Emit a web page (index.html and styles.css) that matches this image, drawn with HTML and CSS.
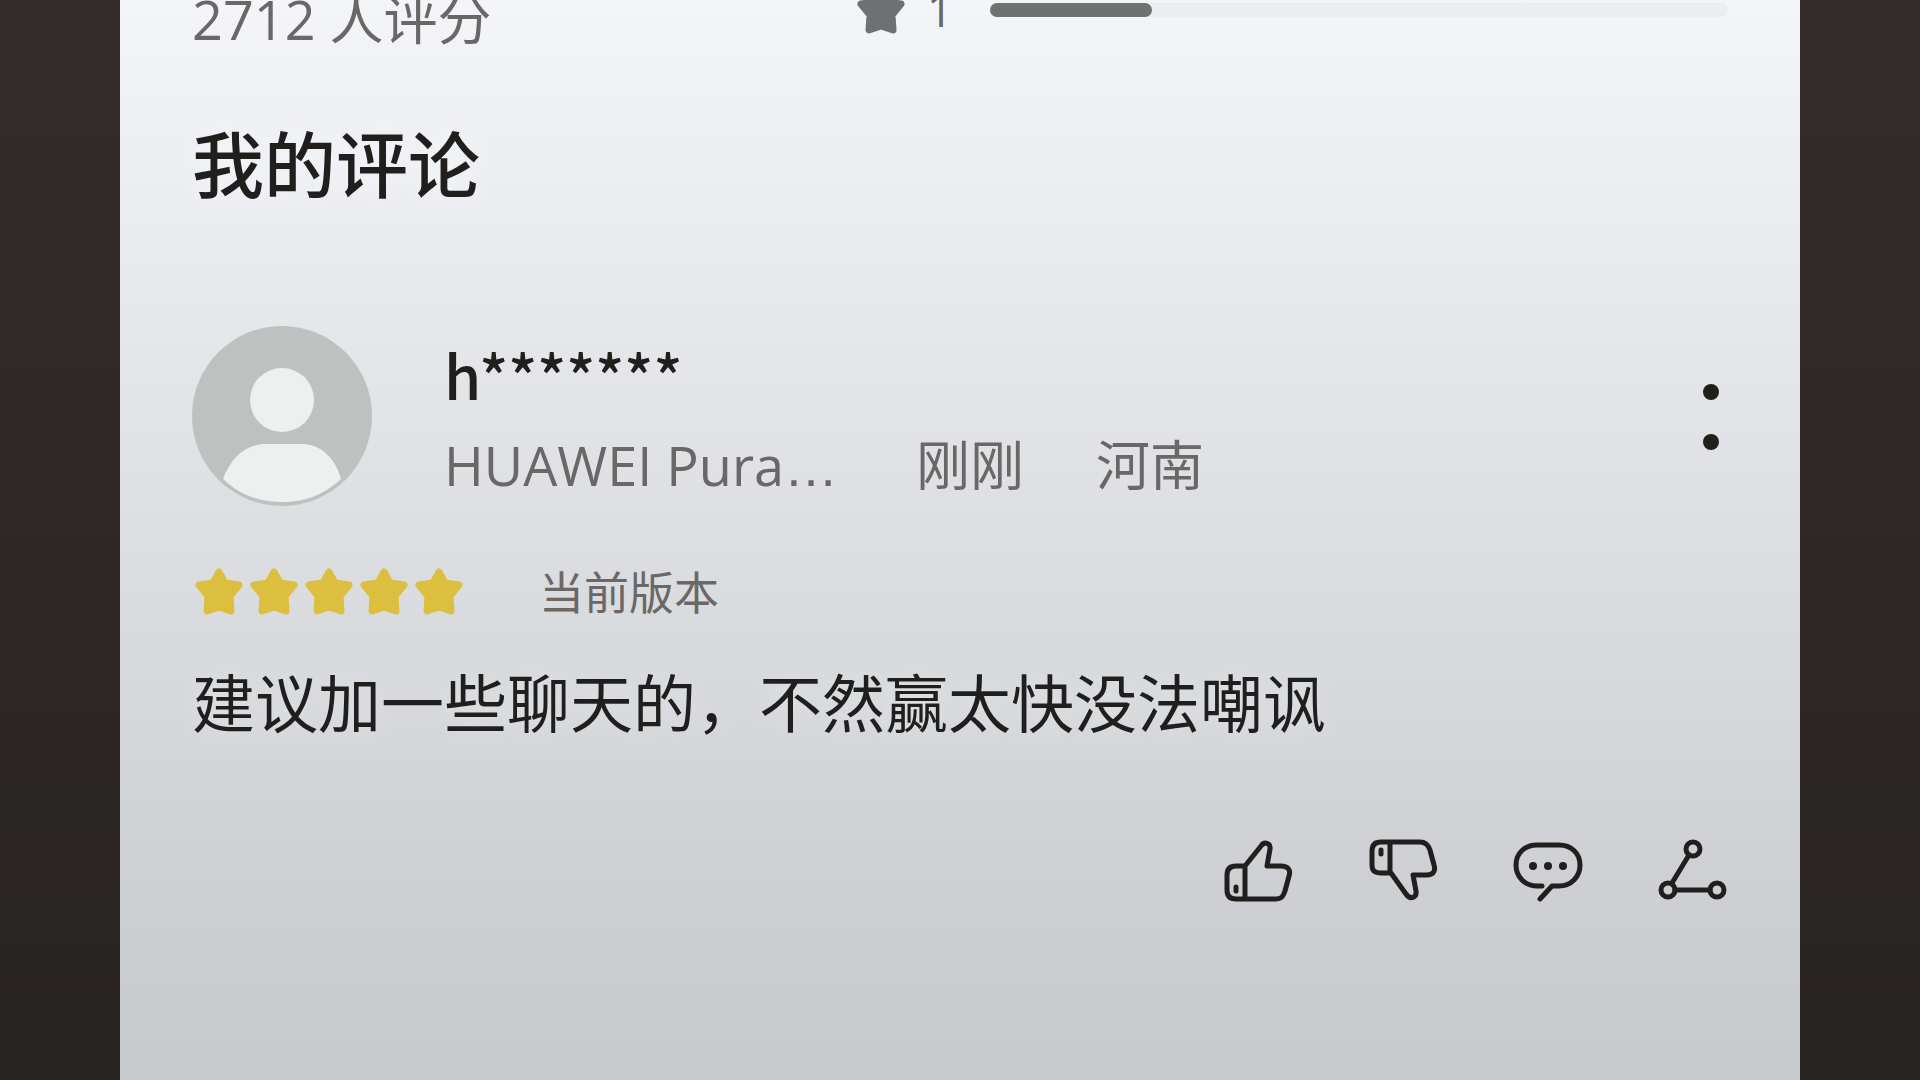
FILE: index.html
```html
<!DOCTYPE html>
<html lang="zh-CN">
<head>
  <meta charset="UTF-8">
  <meta name="viewport" content="width=device-width, initial-scale=1.0">
  <title>我的评论</title>
  <link rel="stylesheet" href="styles.css">
</head>
<body>

<svg class="symbols" aria-hidden="true">
  <symbol id="star" viewBox="0 0 55 55">
    <path d="M27 8 L33 19 L47 21 L38 32 L39 47 L27 43 L15 47 L16 32 L7 21 L21 19 Z" fill="currentColor" stroke="currentColor" stroke-width="7" stroke-linejoin="round"/>
  </symbol>
</svg>

<main class="panel">
  <section class="summary">
    <div class="summary-count">2712 人评分</div>
    <div class="summary-row">
      <svg class="summary-star"><use href="#star"/></svg>
      <span class="summary-level">1</span>
      <div class="bar"><div class="bar-fill" style="width: 22%"></div></div>
    </div>
  </section>

  <h2 class="title">我的评论</h2>

  <article class="review">
    <header class="review-header">
      <svg class="avatar" viewBox="0 0 180 180">
        <circle cx="90" cy="90" r="90" fill="#bfc0c0"/>
        <ellipse cx="90" cy="74" rx="32" ry="32" fill="#eeefef"/>
        <path d="M31 153 C39 131 54 118 74 118 H110 C129 118 143 132 149 153 C132 169 113 176 90 176 C67 176 48 169 31 153 Z" fill="#eeefef"/>
      </svg>
      <div class="user">
        <div class="user-name">h*******</div>
        <div class="user-meta">
          <span class="device">HUAWEI Pura<span class="dots">…</span></span>
          <span>刚刚</span>
          <span>河南</span>
        </div>
      </div>
      <button type="button" class="icon-button more" aria-label="更多">
        <svg viewBox="0 0 34 72">
          <circle cx="17" cy="12" r="8" fill="currentColor"/>
          <circle cx="17" cy="62" r="8" fill="currentColor"/>
        </svg>
      </button>
    </header>

    <div class="rating">
      <div class="stars">
        <svg><use href="#star"/></svg>
        <svg><use href="#star"/></svg>
        <svg><use href="#star"/></svg>
        <svg><use href="#star"/></svg>
        <svg><use href="#star"/></svg>
      </div>
      <span class="version">当前版本</span>
    </div>

    <p class="review-text">建议加一些聊天的，不然赢太快没法嘲讽</p>

    <footer class="actions">
      <button type="button" class="icon-button" aria-label="赞">
        <svg viewBox="0 0 72 72">
          <path d="M24 32 L40 12 C43 7 50 9 49 15 L46 32 H60 C67 32 70 36 68 42 L64 57 C62 63 60 65 55 65 H15 C9 65 6 62 6 56 V41 C6 35 9 32 15 32 Z M24 32 V65"/>
          <path d="M15 53 V57"/>
        </svg>
      </button>
      <button type="button" class="icon-button" aria-label="踩">
        <svg viewBox="0 0 72 72">
          <path d="M25 39 L40 60 C44 66 51 64 50 57 L47 41 H61 C67 41 70 37 68 31 L64 16 C62 10 59 8 54 8 H15 C9 8 6 11 6 17 V31 C6 37 9 39 15 39 Z M24 8 V39"/>
          <path d="M15 16 V20"/>
        </svg>
      </button>
      <button type="button" class="icon-button" aria-label="回复">
        <svg viewBox="0 0 72 72">
          <path d="M31 52 H26 C14 52 5 43 5 31 C5 19 14 11 26 11 H48 C60 11 69 19 69 31 C69 43 60 52 48 52 H41 L29 65"/>
          <g class="solid">
            <circle cx="22" cy="32" r="4"/>
            <circle cx="37" cy="32" r="4"/>
            <circle cx="52" cy="32" r="4"/>
          </g>
        </svg>
      </button>
      <button type="button" class="icon-button" aria-label="分享">
        <svg viewBox="0 0 72 72">
          <circle cx="37" cy="15" r="7"/>
          <circle cx="12" cy="56" r="7"/>
          <circle cx="61" cy="56" r="7"/>
          <path d="M33 21 L16 49 M19 56 H54"/>
        </svg>
      </button>
    </footer>
  </article>
</main>

</body>
</html>
```

FILE: styles.css
```css
* {
  box-sizing: border-box;
}
body {
  margin: 0;
  padding: 0 6.25vw;
  min-height: 100vh;
  display: flex;
  font-family: "Noto Sans CJK SC", sans-serif;
  color: #211e1e;
  background: linear-gradient(#332c2b, #282422);
}
.symbols {
  display: none;
}
.panel {
  flex: 1;
  min-width: 0;
  padding: 0 72px;
  background: linear-gradient(#f3f5f8 0%, #edeef2 15%, #dcdee1 50%, #cdced1 85%, #c8c9cc 100%);
}

/* rating summary */
.summary {
  display: grid;
  grid-template-columns: 662px 1fr;
  align-items: start;
  font-family: "Open Sans", "Noto Sans CJK SC", sans-serif;
  color: #6b6767;
}
.summary-count {
  font-size: 54px;
  line-height: 38px;
}
.summary-row {
  display: flex;
  align-items: center;
  height: 20px;
}
.summary-star {
  width: 55px;
  height: 55px;
  margin-right: 18px;
  color: #6f7071;
}
.summary-level {
  width: 63px;
  font-size: 45px;
  line-height: 20px;
}
.bar {
  flex: 1;
  height: 14px;
  border-radius: 7px;
  background: #ecedf0;
}
.bar-fill {
  height: 100%;
  border-radius: 7px;
  background: #707171;
}

.title {
  margin: 81px 0 123px;
  font-size: 72px;
  font-weight: 500;
  line-height: 84px;
  text-shadow: 0 0 24px #f4f9fc;
}

/* review */
.review-header {
  display: flex;
  align-items: center;
}
.avatar {
  flex: none;
  width: 180px;
  height: 180px;
  margin-right: 72px;
}
.user-name {
  margin-bottom: 18px;
  font-size: 60px;
  font-weight: 500;
  line-height: 80px;
}
.user-meta {
  display: flex;
  gap: 72px;
  font-family: "Open Sans", "Noto Sans CJK SC", sans-serif;
  font-size: 54px;
  line-height: 66px;
  color: #6b6767;
}
.device {
  width: 400px;
  white-space: nowrap;
}
.dots {
  font-family: "Liberation Sans", sans-serif;
  line-height: 1;
}
.icon-button {
  width: 72px;
  height: 72px;
  padding: 0;
  border: none;
  background: none;
  color: #211e1e;
  cursor: pointer;
}
.icon-button svg {
  display: block;
  width: 100%;
  height: 100%;
}
.more {
  width: 34px;
  margin-left: auto;
}
.rating {
  display: flex;
  align-items: center;
  gap: 72px;
  height: 60px;
  margin-top: 55px;
}
.stars {
  display: flex;
  color: #dcbf3e;
}
.stars svg {
  width: 55px;
  height: 55px;
}
.version {
  font-size: 45px;
  line-height: 60px;
  color: #6b6767;
}
.review-text {
  margin: 37px 0 92px;
  font-size: 63px;
  line-height: 84px;
  text-shadow: 0 0 24px #e2e8ea;
}
.actions {
  display: flex;
  justify-content: flex-end;
  gap: 73px;
}
.actions svg {
  fill: none;
  stroke: currentColor;
  stroke-width: 5;
  stroke-linecap: round;
  stroke-linejoin: round;
}
.actions .solid {
  fill: currentColor;
  stroke: none;
}
```
